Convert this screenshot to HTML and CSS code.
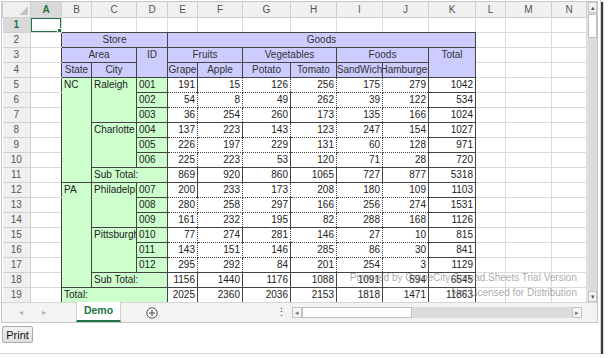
FILE: index.html
```html
<!DOCTYPE html>
<html lang="en">
<head>
  <meta charset="UTF-8">
  <title>Spread Sheet - Demo</title>
  <link rel="stylesheet" href="styles.css">
</head>
<body>
  <div class="frame">
    <div class="spread">
      <div class="view">
        <table class="grid">
          <colgroup>
            <col style="width:28px"><col style="width:31px"><col style="width:30px"><col style="width:45px">
            <col style="width:31px"><col style="width:30px"><col style="width:45px"><col style="width:48px">
            <col style="width:46px"><col style="width:46px"><col style="width:46px"><col style="width:47px">
            <col style="width:30px"><col style="width:46px"><col style="width:35px">
          </colgroup>
          <tr class="colhead">
            <th class="corner"></th><th class="sel">A</th><th>B</th><th>C</th><th>D</th><th>E</th><th>F</th>
            <th>G</th><th>H</th><th>I</th><th>J</th><th>K</th><th>L</th><th>M</th><th>N</th>
          </tr>
          <tr>
            <th class="rh sel">1</th>
            <td class="active"><div class="cursor"></div></td>
            <td class="eb"></td><td class="eb"></td><td class="eb"></td><td class="eb"></td><td class="eb"></td>
            <td class="eb"></td><td class="eb"></td><td class="eb"></td><td class="eb"></td><td class="eb"></td>
            <td></td><td></td><td></td>
          </tr>
          <tr>
            <th class="rh">2</th><td class="er"></td>
            <td class="hd" colspan="3">Store</td><td class="hd" colspan="7">Goods</td>
            <td></td><td></td><td></td>
          </tr>
          <tr>
            <th class="rh">3</th><td class="er"></td>
            <td class="hd" colspan="2">Area</td><td class="hd" rowspan="2">ID</td>
            <td class="hd" colspan="2">Fruits</td><td class="hd" colspan="2">Vegetables</td>
            <td class="hd" colspan="2">Foods</td><td class="hd" rowspan="2">Total</td>
            <td></td><td></td><td></td>
          </tr>
          <tr>
            <th class="rh">4</th><td class="er"></td>
            <td class="hd">State</td><td class="hd">City</td>
            <td class="hd"><div class="clip">Grape</div></td><td class="hd">Apple</td>
            <td class="hd">Potato</td><td class="hd">Tomato</td>
            <td class="hd"><div class="clip">SandWich</div></td><td class="hd"><div class="clip">Hamburger</div></td>
            <td></td><td></td><td></td>
          </tr>
          <tr>
            <th class="rh">5</th><td class="er"></td>
            <td class="gr" rowspan="7">NC</td><td class="gr" rowspan="3">Raleigh</td><td class="gr">001</td>
            <td class="n gt">191</td><td class="n gt">15</td><td class="n gt">126</td><td class="n gt">256</td><td class="n gt">175</td><td class="n gt">279</td><td class="n tot">1042</td>
            <td></td><td></td><td></td>
          </tr>
          <tr>
            <th class="rh">6</th><td class="er"></td>
            <td class="gr">002</td>
            <td class="n">54</td><td class="n">8</td><td class="n">49</td><td class="n">262</td><td class="n">39</td><td class="n">122</td><td class="n tot">534</td>
            <td></td><td></td><td></td>
          </tr>
          <tr>
            <th class="rh">7</th><td class="er"></td>
            <td class="gr">003</td>
            <td class="n">36</td><td class="n">254</td><td class="n">260</td><td class="n">173</td><td class="n">135</td><td class="n">166</td><td class="n tot">1024</td>
            <td></td><td></td><td></td>
          </tr>
          <tr>
            <th class="rh">8</th><td class="er"></td>
            <td class="gr" rowspan="3">Charlotte</td><td class="gr">004</td>
            <td class="n gt">137</td><td class="n gt">223</td><td class="n gt">143</td><td class="n gt">123</td><td class="n gt">247</td><td class="n gt">154</td><td class="n tot">1027</td>
            <td></td><td></td><td></td>
          </tr>
          <tr>
            <th class="rh">9</th><td class="er"></td>
            <td class="gr">005</td>
            <td class="n">226</td><td class="n">197</td><td class="n">229</td><td class="n">131</td><td class="n">60</td><td class="n">128</td><td class="n tot">971</td>
            <td></td><td></td><td></td>
          </tr>
          <tr>
            <th class="rh">10</th><td class="er"></td>
            <td class="gr">006</td>
            <td class="n">225</td><td class="n">223</td><td class="n">53</td><td class="n">120</td><td class="n">71</td><td class="n">28</td><td class="n tot">720</td>
            <td></td><td></td><td></td>
          </tr>
          <tr>
            <th class="rh">11</th><td class="er"></td>
            <td class="gr" colspan="2">Sub Total:</td>
            <td class="n sub">869</td><td class="n sub">920</td><td class="n sub">860</td><td class="n sub">1065</td><td class="n sub">727</td><td class="n sub">877</td><td class="n tot">5318</td>
            <td></td><td></td><td></td>
          </tr>
          <tr>
            <th class="rh">12</th><td class="er"></td>
            <td class="gr" rowspan="7">PA</td><td class="gr" rowspan="3"><div class="cut">Philadelphia</div></td><td class="gr">007</td>
            <td class="n gt">200</td><td class="n gt">233</td><td class="n gt">173</td><td class="n gt">208</td><td class="n gt">180</td><td class="n gt">109</td><td class="n tot">1103</td>
            <td></td><td></td><td></td>
          </tr>
          <tr>
            <th class="rh">13</th><td class="er"></td>
            <td class="gr">008</td>
            <td class="n">280</td><td class="n">258</td><td class="n">297</td><td class="n">166</td><td class="n">256</td><td class="n">274</td><td class="n tot">1531</td>
            <td></td><td></td><td></td>
          </tr>
          <tr>
            <th class="rh">14</th><td class="er"></td>
            <td class="gr">009</td>
            <td class="n">161</td><td class="n">232</td><td class="n">195</td><td class="n">82</td><td class="n">288</td><td class="n">168</td><td class="n tot">1126</td>
            <td></td><td></td><td></td>
          </tr>
          <tr>
            <th class="rh">15</th><td class="er"></td>
            <td class="gr" rowspan="3"><div class="cut">Pittsburgh</div></td><td class="gr">010</td>
            <td class="n gt">77</td><td class="n gt">274</td><td class="n gt">281</td><td class="n gt">146</td><td class="n gt">27</td><td class="n gt">10</td><td class="n tot">815</td>
            <td></td><td></td><td></td>
          </tr>
          <tr>
            <th class="rh">16</th><td class="er"></td>
            <td class="gr">011</td>
            <td class="n">143</td><td class="n">151</td><td class="n">146</td><td class="n">285</td><td class="n">86</td><td class="n">30</td><td class="n tot">841</td>
            <td></td><td></td><td></td>
          </tr>
          <tr>
            <th class="rh">17</th><td class="er"></td>
            <td class="gr">012</td>
            <td class="n">295</td><td class="n">292</td><td class="n">84</td><td class="n">201</td><td class="n">254</td><td class="n">3</td><td class="n tot">1129</td>
            <td></td><td></td><td></td>
          </tr>
          <tr>
            <th class="rh">18</th><td class="er"></td>
            <td class="gr" colspan="2">Sub Total:</td>
            <td class="n sub">1156</td><td class="n sub">1440</td><td class="n sub">1176</td><td class="n sub">1088</td><td class="n sub">1091</td><td class="n sub">594</td><td class="n tot">6545</td>
            <td></td><td></td><td></td>
          </tr>
          <tr>
            <th class="rh">19</th><td class="er"></td>
            <td class="gr" colspan="3">Total:</td>
            <td class="n sub">2025</td><td class="n sub">2360</td><td class="n sub">2036</td><td class="n sub">2153</td><td class="n sub">1818</td><td class="n sub">1471</td><td class="n tot">11863</td>
            <td></td><td></td><td></td>
          </tr>
        </table>

        <div class="vscroll">
          <div class="sbtn">&#9652;</div>
          <div class="vthumb"></div>
          <div class="vtrack"></div>
          <div class="sbtn">&#9662;</div>
        </div>

        <!-- trial watermark drawn over the cells -->
        <div class="watermark">
          <div>Powered by GrapeCity Spread.Sheets Trial Version</div>
          <div>Not Licensed for Distribution</div>
        </div>
      </div>

      <div class="tabbar">
        <div class="nav"><span>&#9666;</span><span>&#9656;</span></div>
        <div class="tab">Demo</div>
        <div class="add">
          <svg width="12" height="12" viewBox="0 0 12 12">
            <circle cx="6" cy="6" r="5.2" fill="none" stroke="#555" stroke-width="1"/>
            <path d="M6 3v6M3 6h6" stroke="#555" stroke-width="1.2"/>
          </svg>
        </div>
        <div class="spacer"></div>
        <div class="dots">&#8942;</div>
        <div class="hscroll">
          <div class="hbtn">&#9666;</div>
          <div class="hthumb"></div>
          <div class="htrack"></div>
          <div class="hbtn">&#9656;</div>
        </div>
      </div>
    </div>

    <button class="print">Print</button>
  </div>
</body>
</html>
```

FILE: styles.css
```css
html, body {
  margin: 0;
  padding: 0;
  background: #fff;
  font-family: 'Liberation Sans', Arial, sans-serif;
}

.frame {
  width: 599px;
  height: 352px;
  padding: 1px 0 0 1px;
  border: 1px solid #d6d6d6;
  border-top: none;
  border-left: none;
  box-shadow: 2px 2px 1px #3a3a3a;
  position: relative;
}

.spread {
  width: 595px;
  border: 1px solid #c6c6c6;
  background: #fff;
}

.view {
  display: flex;
  position: relative;
  height: 300px;
  overflow: hidden;
}

.grid {
  table-layout: fixed;
  width: 584px;
  border-collapse: collapse;
  font-size: 10px;
  color: #222;
}

.grid tr {
  height: 15px;
}

.grid td, .grid th {
  padding: 0 2px;
  height: 14px;
  line-height: 13px;
  white-space: nowrap;
  overflow: hidden;
  vertical-align: top;
  text-align: left;
  border: 1px solid #dadada;
  font-weight: normal;
}

.colhead th {
  background: #f0f0f0;
  color: #555;
  text-align: center;
  vertical-align: middle;
  border-color: #cfcfcf;
  border-top: none;
}

.colhead th.corner {
  background: #f0f0f0 linear-gradient(135deg, transparent 62%, #c4c4c4 62%) no-repeat right 2px bottom 2px / 11px 11px;
}

.grid th.rh {
  background: #f0f0f0;
  color: #555;
  text-align: center;
  vertical-align: middle;
  border-color: #cfcfcf;
  border-left: none;
}

.grid th.sel {
  background: #d9d9d9;
  color: #217346;
  font-weight: bold;
}

.active {
  position: relative;
}

.cursor {
  position: absolute;
  left: -1px;
  top: -1px;
  right: -1px;
  bottom: -1px;
  border: 2px solid #217346;
}

.cursor::after {
  content: '';
  position: absolute;
  right: -4px;
  bottom: -4px;
  width: 5px;
  height: 5px;
  background: #217346;
  border: 1px solid #fff;
}

/* edges of the styled block */
.grid td.eb {
  border-bottom-color: #444;
}

.grid td.er {
  border-right-color: #444;
}

.grid td.hd {
  background: #ccccff;
  color: #333;
  text-align: center;
  border: 1px solid #444;
}

.grid td.gr {
  background: #ccffcc;
  color: #222;
  border: 1px solid #444;
}

.grid td.n {
  text-align: right;
  border: 1px dotted #444;
  vertical-align: middle;
}

.grid td.gt {
  border-top: 1px solid #444;
}

.grid td.n:nth-child(7) {
  border-left: 1px solid #444;
}

.grid td.sub, .grid td.tot {
  border: 1px solid #444;
}

.clip {
  display: flex;
  justify-content: center;
  overflow: hidden;
  margin: 0 -2px;
}

.cut {
  overflow: hidden;
  margin-right: -2px;
}

.vscroll {
  width: 11px;
  height: 300px;
  display: flex;
  flex-direction: column;
  background: #dcdcdc;
  border-left: 1px solid #e6e6e6;
}

.sbtn {
  height: 11px;
  background: #f4f4f4;
  border: 1px solid #c4c4c4;
  box-sizing: border-box;
  font-size: 7px;
  line-height: 9px;
  text-align: center;
  color: #555;
}

.vthumb {
  height: 24px;
  margin-top: 1px;
  background: #fff;
  border: 1px solid #bdbdbd;
  box-sizing: border-box;
}

.vtrack {
  flex: 1;
}

.watermark {
  position: absolute;
  right: 20px;
  top: 268px;
  text-align: right;
  font-size: 10px;
  line-height: 15px;
  color: rgba(110, 110, 110, 0.6);
  pointer-events: none;
}

.tabbar {
  height: 20px;
  display: flex;
  align-items: stretch;
  background: #f3f3f3;
  border-top: 1px solid #d4d4d4;
  box-sizing: border-box;
  font-size: 10px;
}

.nav {
  width: 74px;
  display: flex;
  align-items: center;
  gap: 11px;
  padding-left: 13px;
  box-sizing: border-box;
  color: #b0b0b0;
  font-size: 8px;
}

.nav span {
  width: 12px;
  text-align: center;
}

.tab {
  width: 45px;
  background: #fff;
  border-left: 1px solid #cfcfcf;
  border-right: 1px solid #cfcfcf;
  border-bottom: 2px solid #217346;
  box-sizing: border-box;
  color: #217346;
  font-weight: bold;
  font-size: 10.5px;
  text-align: center;
  line-height: 17px;
  margin-top: -1px;
}

.add {
  width: 62px;
  display: flex;
  align-items: center;
  justify-content: center;
}

.spacer {
  flex: 1;
}

.dots {
  width: 10px;
  margin-right: 6px;
  text-align: center;
  line-height: 19px;
  color: #444;
  font-size: 11px;
}

.hscroll {
  width: 290px;
  height: 11px;
  margin: 4px 15px 0 0;
  display: flex;
  background: #dcdcdc;
}

.hbtn {
  width: 10px;
  background: #f4f4f4;
  border: 1px solid #c4c4c4;
  box-sizing: border-box;
  font-size: 7px;
  line-height: 9px;
  text-align: center;
  color: #777;
}

.hthumb {
  width: 110px;
  background: #fff;
  border: 1px solid #bdbdbd;
  box-sizing: border-box;
}

.htrack {
  flex: 1;
}

.print {
  display: block;
  margin: 3px 0 0 1px;
  width: 31px;
  height: 17px;
  padding: 0;
  font-family: 'Liberation Sans', Arial, sans-serif;
  font-size: 11px;
  color: #111;
  background: linear-gradient(#f2f2f2, #dedede);
  border: 1px solid #acacac;
  border-radius: 2px;
}
```
